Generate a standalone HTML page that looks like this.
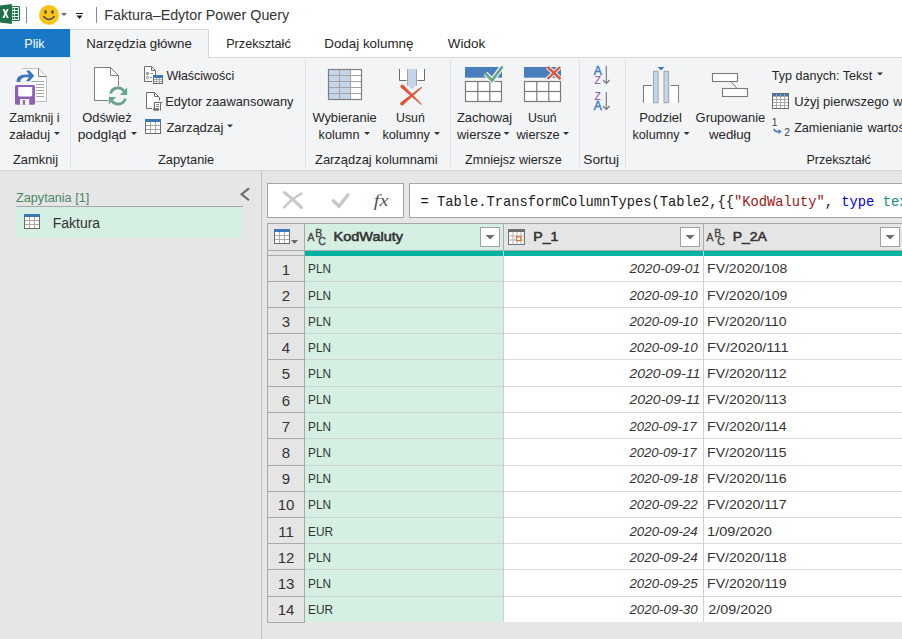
<!DOCTYPE html>
<html><head><meta charset="utf-8"><title>Faktura–Edytor Power Query</title>
<style>
html,body{margin:0;padding:0;width:902px;height:639px;overflow:hidden;background:#e6e6e6;}
svg{display:block;}

</style></head>
<body>
<svg width="902" height="639" viewBox="0 0 902 639">
<rect x="0" y="0" width="902" height="639" fill="#e6e6e6" />
<rect x="0" y="0" width="902" height="57" fill="#ffffff" />
<path d="M0 5.5 L11.8 4 L11.8 24 L0 22.5 Z" fill="#1e7145"/>
<rect x="11.5" y="6.5" width="8" height="14" rx="1" fill="#fff" stroke="#1e7145" stroke-width="1.2"/>
<rect x="12.5" y="8" width="1.8" height="2" fill="#1e7145" />
<rect x="15" y="8" width="3" height="2" fill="#1e7145" />
<rect x="12.5" y="11" width="1.8" height="2" fill="#1e7145" />
<rect x="15" y="11" width="3" height="2" fill="#1e7145" />
<rect x="12.5" y="14" width="1.8" height="2" fill="#1e7145" />
<rect x="15" y="14" width="3" height="2" fill="#1e7145" />
<rect x="12.5" y="17" width="1.8" height="2" fill="#1e7145" />
<rect x="15" y="17" width="3" height="2" fill="#1e7145" />
<path d="M2.6 9 L4.6 9 L5.6 11.5 L6.6 9 L8.6 9 L6.7 13.5 L8.8 18 L6.8 18 L5.6 15.3 L4.4 18 L2.4 18 L4.5 13.5 Z" fill="#fff"/>
<rect x="26" y="7" width="1" height="16" fill="#8a8a8a" />
<circle cx="49" cy="15" r="10" fill="#fbc316"/>
<ellipse cx="45.5" cy="12" rx="1.3" ry="1.9" fill="#4b4f58"/>
<ellipse cx="52.5" cy="12" rx="1.3" ry="1.9" fill="#4b4f58"/>
<path d="M43.3 16 Q49 23 54.7 16" fill="none" stroke="#4b4f58" stroke-width="1.3"/>
<path d="M61.0 13.0 L67.0 13.0 L64 16.0 Z" fill="#6a6a6a"/>
<rect x="76" y="13" width="7" height="1" fill="#1a1a1a" />
<path d="M76.5 15.5 L82.5 15.5 L79.5 19 Z" fill="#1a1a1a"/>
<rect x="96" y="7" width="1" height="16" fill="#8a8a8a" />
<text x="104.30" y="20" font-size="14.3" fill="#333333" text-anchor="start" font-weight="normal" font-style="normal" style='font-family:"Liberation Sans", sans-serif' textLength="184.85" lengthAdjust="spacingAndGlyphs" >Faktura–Edytor Power Query</text>
<rect x="0" y="29" width="70" height="28" fill="#1878c7" />
<text x="24.33" y="48" font-size="13" fill="#ffffff" text-anchor="start" font-weight="normal" font-style="normal" style='font-family:"Liberation Sans", sans-serif' textLength="20.34" lengthAdjust="spacingAndGlyphs" >Plik</text>
<rect x="70" y="29" width="139" height="29" fill="#f3f4f6" />
<rect x="70" y="29" width="139" height="1" fill="#d5d6d9" />
<rect x="70" y="29" width="1" height="28" fill="#e4e5e8" />
<rect x="208" y="29" width="1" height="28" fill="#d5d6d9" />
<rect x="208" y="57" width="694" height="1" fill="#d5d6d9" />
<text x="86.18" y="48" font-size="13" fill="#262626" text-anchor="start" font-weight="normal" font-style="normal" style='font-family:"Liberation Sans", sans-serif' textLength="105.75" lengthAdjust="spacingAndGlyphs" >Narzędzia główne</text>
<text x="226.21" y="48" font-size="13" fill="#262626" text-anchor="start" font-weight="normal" font-style="normal" style='font-family:"Liberation Sans", sans-serif' textLength="64.51" lengthAdjust="spacingAndGlyphs" >Przekształć</text>
<text x="324.29" y="48" font-size="13" fill="#262626" text-anchor="start" font-weight="normal" font-style="normal" style='font-family:"Liberation Sans", sans-serif' textLength="89.08" lengthAdjust="spacingAndGlyphs" >Dodaj kolumnę</text>
<text x="447.80" y="48" font-size="13" fill="#262626" text-anchor="start" font-weight="normal" font-style="normal" style='font-family:"Liberation Sans", sans-serif' textLength="37.37" lengthAdjust="spacingAndGlyphs" >Widok</text>
<rect x="0" y="58" width="902" height="112" fill="#f3f4f6" />
<rect x="70" y="57" width="138" height="1" fill="#f3f4f6" />
<rect x="0" y="170" width="902" height="1" fill="#d6d6d6" />
<rect x="70" y="60" width="1" height="107" fill="#dedfe2" />
<rect x="305" y="60" width="1" height="107" fill="#dedfe2" />
<rect x="450" y="60" width="1" height="107" fill="#dedfe2" />
<rect x="579" y="60" width="1" height="107" fill="#dedfe2" />
<rect x="625" y="60" width="1" height="107" fill="#dedfe2" />
<text x="13.00" y="163.5" font-size="12.7" fill="#262626" text-anchor="start" font-weight="normal" font-style="normal" style='font-family:"Liberation Sans", sans-serif' textLength="45.05" lengthAdjust="spacingAndGlyphs" >Zamknij</text>
<text x="158.00" y="163.5" font-size="12.7" fill="#262626" text-anchor="start" font-weight="normal" font-style="normal" style='font-family:"Liberation Sans", sans-serif' textLength="56.21" lengthAdjust="spacingAndGlyphs" >Zapytanie</text>
<text x="315.00" y="163.5" font-size="12.7" fill="#262626" text-anchor="start" font-weight="normal" font-style="normal" style='font-family:"Liberation Sans", sans-serif' textLength="122.67" lengthAdjust="spacingAndGlyphs" >Zarządzaj kolumnami</text>
<text x="465.00" y="163.5" font-size="12.7" fill="#262626" text-anchor="start" font-weight="normal" font-style="normal" style='font-family:"Liberation Sans", sans-serif' textLength="96.65" lengthAdjust="spacingAndGlyphs" >Zmniejsz wiersze</text>
<text x="583.34" y="163.5" font-size="12.7" fill="#262626" text-anchor="start" font-weight="normal" font-style="normal" style='font-family:"Liberation Sans", sans-serif' textLength="35.85" lengthAdjust="spacingAndGlyphs" >Sortuj</text>
<text x="806.39" y="163.5" font-size="12.7" fill="#262626" text-anchor="start" font-weight="normal" font-style="normal" style='font-family:"Liberation Sans", sans-serif' textLength="64.37" lengthAdjust="spacingAndGlyphs" >Przekształć</text>
<text x="9.20" y="121.5" font-size="12.7" fill="#262626" text-anchor="start" font-weight="normal" font-style="normal" style='font-family:"Liberation Sans", sans-serif' textLength="50.48" lengthAdjust="spacingAndGlyphs" >Zamknij i</text>
<text x="9.20" y="139" font-size="12.7" fill="#262626" text-anchor="start" font-weight="normal" font-style="normal" style='font-family:"Liberation Sans", sans-serif' textLength="40.92" lengthAdjust="spacingAndGlyphs" >załaduj</text>
<path d="M54.0 132.0 L60.0 132.0 L57 135.0 Z" fill="#333"/>
<text x="82.20" y="121.5" font-size="12.7" fill="#262626" text-anchor="start" font-weight="normal" font-style="normal" style='font-family:"Liberation Sans", sans-serif' textLength="49.45" lengthAdjust="spacingAndGlyphs" >Odśwież</text>
<text x="77.70" y="139" font-size="12.7" fill="#262626" text-anchor="start" font-weight="normal" font-style="normal" style='font-family:"Liberation Sans", sans-serif' textLength="48.77" lengthAdjust="spacingAndGlyphs" >podgląd</text>
<path d="M131.0 132.0 L137.0 132.0 L134 135.0 Z" fill="#333"/>
<text x="312.40" y="121.5" font-size="12.7" fill="#262626" text-anchor="start" font-weight="normal" font-style="normal" style='font-family:"Liberation Sans", sans-serif' textLength="64.26" lengthAdjust="spacingAndGlyphs" >Wybieranie</text>
<text x="318.60" y="139" font-size="12.7" fill="#262626" text-anchor="start" font-weight="normal" font-style="normal" style='font-family:"Liberation Sans", sans-serif' textLength="40.87" lengthAdjust="spacingAndGlyphs" >kolumn</text>
<path d="M364.0 132.0 L370.0 132.0 L367 135.0 Z" fill="#333"/>
<text x="396.00" y="121.5" font-size="12.7" fill="#262626" text-anchor="start" font-weight="normal" font-style="normal" style='font-family:"Liberation Sans", sans-serif' textLength="28.78" lengthAdjust="spacingAndGlyphs" >Usuń</text>
<text x="382.40" y="139" font-size="12.7" fill="#262626" text-anchor="start" font-weight="normal" font-style="normal" style='font-family:"Liberation Sans", sans-serif' textLength="47.53" lengthAdjust="spacingAndGlyphs" >kolumny</text>
<path d="M434.0 132.0 L440.0 132.0 L437 135.0 Z" fill="#333"/>
<text x="457.00" y="121.5" font-size="12.7" fill="#262626" text-anchor="start" font-weight="normal" font-style="normal" style='font-family:"Liberation Sans", sans-serif' textLength="55.14" lengthAdjust="spacingAndGlyphs" >Zachowaj</text>
<text x="457.00" y="139" font-size="12.7" fill="#262626" text-anchor="start" font-weight="normal" font-style="normal" style='font-family:"Liberation Sans", sans-serif' textLength="43.85" lengthAdjust="spacingAndGlyphs" >wiersze</text>
<path d="M503.5 132.0 L509.5 132.0 L506.5 135.0 Z" fill="#333"/>
<text x="528.00" y="121.5" font-size="12.7" fill="#262626" text-anchor="start" font-weight="normal" font-style="normal" style='font-family:"Liberation Sans", sans-serif' textLength="28.58" lengthAdjust="spacingAndGlyphs" >Usuń</text>
<text x="516.40" y="139" font-size="12.7" fill="#262626" text-anchor="start" font-weight="normal" font-style="normal" style='font-family:"Liberation Sans", sans-serif' textLength="43.24" lengthAdjust="spacingAndGlyphs" >wiersze</text>
<path d="M563.0 132.0 L569.0 132.0 L566 135.0 Z" fill="#333"/>
<text x="639.18" y="121.5" font-size="12.7" fill="#262626" text-anchor="start" font-weight="normal" font-style="normal" style='font-family:"Liberation Sans", sans-serif' textLength="42.79" lengthAdjust="spacingAndGlyphs" >Podziel</text>
<text x="632.50" y="139" font-size="12.7" fill="#262626" text-anchor="start" font-weight="normal" font-style="normal" style='font-family:"Liberation Sans", sans-serif' textLength="47.03" lengthAdjust="spacingAndGlyphs" >kolumny</text>
<path d="M683.6 132.0 L689.6 132.0 L686.6 135.0 Z" fill="#333"/>
<text x="695.60" y="121.5" font-size="12.7" fill="#262626" text-anchor="start" font-weight="normal" font-style="normal" style='font-family:"Liberation Sans", sans-serif' textLength="69.60" lengthAdjust="spacingAndGlyphs" >Grupowanie</text>
<text x="709.00" y="139" font-size="12.7" fill="#262626" text-anchor="start" font-weight="normal" font-style="normal" style='font-family:"Liberation Sans", sans-serif' textLength="42.00" lengthAdjust="spacingAndGlyphs" >według</text>
<text x="166.40" y="80" font-size="12.7" fill="#262626" text-anchor="start" font-weight="normal" font-style="normal" style='font-family:"Liberation Sans", sans-serif' textLength="67.92" lengthAdjust="spacingAndGlyphs" >Właściwości</text>
<text x="165.28" y="106" font-size="12.7" fill="#262626" text-anchor="start" font-weight="normal" font-style="normal" style='font-family:"Liberation Sans", sans-serif' textLength="128.16" lengthAdjust="spacingAndGlyphs" >Edytor zaawansowany</text>
<text x="166.40" y="132" font-size="12.7" fill="#262626" text-anchor="start" font-weight="normal" font-style="normal" style='font-family:"Liberation Sans", sans-serif' textLength="57.06" lengthAdjust="spacingAndGlyphs" >Zarządzaj</text>
<path d="M227.0 124.5 L233.0 124.5 L230 127.5 Z" fill="#333"/>
<text x="771.80" y="80" font-size="12.7" fill="#262626" text-anchor="start" font-weight="normal" font-style="normal" style='font-family:"Liberation Sans", sans-serif' textLength="100.35" lengthAdjust="spacingAndGlyphs" >Typ danych: Tekst</text>
<path d="M877.0 72.5 L883.0 72.5 L880 75.5 Z" fill="#333"/>
<text x="794.20" y="105.5" font-size="12.7" fill="#262626" text-anchor="start" font-weight="normal" font-style="normal" style='font-family:"Liberation Sans", sans-serif' textLength="94.59" lengthAdjust="spacingAndGlyphs" >Użyj pierwszego</text>
<text x="893.20" y="105.5" font-size="12.7" fill="#262626" text-anchor="start" font-weight="normal" font-style="normal" style='font-family:"Liberation Sans", sans-serif' >wiersza jako nagłówków</text>
<text x="794.20" y="131.5" font-size="12.7" fill="#262626" text-anchor="start" font-weight="normal" font-style="normal" style='font-family:"Liberation Sans", sans-serif' textLength="68.56" lengthAdjust="spacingAndGlyphs" >Zamienianie</text>
<text x="867.40" y="131.5" font-size="12.7" fill="#262626" text-anchor="start" font-weight="normal" font-style="normal" style='font-family:"Liberation Sans", sans-serif' >wartości</text>
<path d="M22 68.5 L38.5 68.5 L46.5 76.5 L46.5 101.5 L35 101.5" fill="#fff" stroke="#7f7f7f" stroke-width="1"/>
<path d="M22 68.5 L38.5 68.5 L46.5 76.5 L46.5 101.5 L30 101.5 L30 80 L22 80 Z" fill="#fff"/>
<path d="M38.5 68.5 L38.5 76.5 L46.5 76.5" fill="none" stroke="#7f7f7f" stroke-width="1"/>
<rect x="31" y="81.0" width="13" height="1" fill="#a6a6a6" />
<rect x="36" y="84.0" width="8" height="1" fill="#a6a6a6" />
<rect x="36" y="87.0" width="8" height="1" fill="#a6a6a6" />
<rect x="36" y="90.0" width="8" height="1" fill="#a6a6a6" />
<rect x="36" y="93.0" width="8" height="1" fill="#a6a6a6" />
<rect x="36" y="96.0" width="8" height="1" fill="#a6a6a6" />
<path d="M16.5 82 C16.5 76 21 74.5 27 74.5 L29 74.5 L26 70.5 L29.5 70.5 L34.2 75.8 L29.5 81.2 L26 81.2 L29 77.3 L27 77.3 C23 77.3 20.5 78.5 20.2 82 Z" fill="#3b78c1"/>
<rect x="15" y="85" width="20" height="19.8" rx="1.6" fill="#9061b6"/>
<path d="M18.2 87 L32.2 87 L32.2 94.8 Q32.2 96.4 30.6 96.4 L19.8 96.4 Q18.2 96.4 18.2 94.8 Z" fill="#fff"/>
<rect x="20" y="99" width="9.2" height="5.8" fill="#fff" />
<rect x="22.8" y="100" width="2.2" height="4.8" fill="#9061b6" />
<path d="M94.5 67.5 L110.5 67.5 L118.5 75.5 L118.5 86 M108 100.5 L94.5 100.5 Z" fill="none" stroke="#7f7f7f" stroke-width="1"/>
<path d="M94.5 67.5 L110.5 67.5 L118.5 75.5 L118.5 86 L108 100.5 L94.5 100.5 Z" fill="#fff"/>
<path d="M94.5 100.5 L94.5 67.5 L110.5 67.5 L118.5 75.5 L118.5 86" fill="none" stroke="#7f7f7f" stroke-width="1"/>
<path d="M94.5 100.5 L108 100.5" fill="none" stroke="#7f7f7f" stroke-width="1"/>
<path d="M110.5 67.5 L110.5 75.5 L118.5 75.5" fill="none" stroke="#7f7f7f" stroke-width="1"/>
<circle cx="118" cy="96" r="10" fill="#f3f4f6"/>
<path d="M110.6 93.5 A7.6 7.6 0 0 1 124.2 91.2" fill="none" stroke="#68a68c" stroke-width="2.8"/>
<path d="M127.2 87.5 L127.2 95 L120 95 Z" fill="#68a68c"/>
<path d="M125.4 98.5 A7.6 7.6 0 0 1 111.8 100.8" fill="none" stroke="#68a68c" stroke-width="2.8"/>
<path d="M108.8 104.5 L108.8 97 L116 97 Z" fill="#68a68c"/>
<path d="M144.5 81.5 V66.5 H151.5 L155.5 70.5 V75" fill="#fff" stroke="#6d6d6d" stroke-width="1"/>
<path d="M151.5 66.5 V70.5 H155.5" fill="none" stroke="#6d6d6d" stroke-width="1"/>
<path d="M144.5 81.5 H152" stroke="#6d6d6d" stroke-width="1"/>
<circle cx="147.5" cy="73.5" r="1.4" fill="#8a8a8a"/>
<circle cx="147.5" cy="77.5" r="1.1" fill="none" stroke="#8a8a8a" stroke-width="1"/>
<rect x="150" y="73" width="3" height="1" fill="#9a9a9a" />
<rect x="150" y="77" width="2" height="1" fill="#9a9a9a" />
<rect x="153" y="75" width="10" height="9" fill="#6a6a6a" />
<rect x="153" y="75" width="10" height="3" fill="#3d77b9" />
<rect x="154" y="78" width="8" height="5" fill="#a8a8a8" />
<rect x="154" y="78" width="2" height="1" fill="#ffffff" />
<rect x="154" y="80" width="2" height="1" fill="#ffffff" />
<rect x="154" y="82" width="2" height="1" fill="#ffffff" />
<rect x="157" y="78" width="2" height="1" fill="#ffffff" />
<rect x="157" y="80" width="2" height="1" fill="#ffffff" />
<rect x="157" y="82" width="2" height="1" fill="#ffffff" />
<rect x="160" y="78" width="2" height="1" fill="#ffffff" />
<rect x="160" y="80" width="2" height="1" fill="#ffffff" />
<rect x="160" y="82" width="2" height="1" fill="#ffffff" />
<path d="M146.5 108.5 V92.5 H154.5 L159.5 97.5 V100.5" fill="#fff" stroke="#6d6d6d" stroke-width="1"/>
<path d="M154.5 92.5 V96.5 H159" fill="none" stroke="#6d6d6d" stroke-width="1"/>
<path d="M146.5 108.5 H152" stroke="#6d6d6d" stroke-width="1"/>
<path d="M154.5 109 V102.5 H162.5" fill="none" stroke="#6d6d6d" stroke-width="1.1"/>
<path d="M155 103 H160 V110.5 H155 Z" fill="#fff"/>
<path d="M154.5 103 V109 M160.5 103 V110.5" fill="none" stroke="#6d6d6d" stroke-width="1"/>
<rect x="156" y="104" width="3" height="1" fill="#8a8a8a" />
<rect x="156" y="106" width="3" height="1" fill="#8a8a8a" />
<path d="M153.3 108.2 H159 V110.8 H154.3 Q153.3 110.8 153.3 109.6 Z" fill="#6d6d6d"/>
<rect x="145" y="119" width="16" height="15" fill="#6a6a6a" />
<rect x="146" y="122" width="14" height="11" fill="#ffffff" />
<rect x="145" y="119" width="16" height="3" fill="#3d77b9" />
<rect x="150" y="122" width="1" height="11" fill="#a8a8a8" />
<rect x="155" y="122" width="1" height="11" fill="#a8a8a8" />
<rect x="146" y="125" width="14" height="1" fill="#a8a8a8" />
<rect x="146" y="129" width="14" height="1" fill="#a8a8a8" />
<rect x="328.5" y="69.5" width="33" height="30" fill="#fff" />
<rect x="328.5" y="69.5" width="22" height="30" fill="#c4d6ea" />
<rect x="339.0" y="69.5" width="1" height="30" fill="#a3a3a3" />
<rect x="350.0" y="69.5" width="1" height="30" fill="#a3a3a3" />
<rect x="328.5" y="75.0" width="33" height="1" fill="#a3a3a3" />
<rect x="328.5" y="81.0" width="33" height="1" fill="#a3a3a3" />
<rect x="328.5" y="87.0" width="33" height="1" fill="#a3a3a3" />
<rect x="328.5" y="93.0" width="33" height="1" fill="#a3a3a3" />
<rect x="328.5" y="69.5" width="33" height="30" fill="none" stroke="#7f7f7f" stroke-width="1.2"/>
<rect x="400" y="69" width="7" height="11" fill="#fff" />
<rect x="417" y="69" width="7" height="11" fill="#fff" />
<path d="M399.5 69 V80.5 H406.5 M417.5 80.5 H424.5 V69" fill="none" stroke="#6d6d6d" stroke-width="1"/>
<path d="M407.5 69 V85 L412 89.3 L416.5 85 V69 Z" fill="#c2d5ea"/>
<path d="M407.5 69 V85.5 M416.5 69 V85.5" fill="none" stroke="#a3a3a3" stroke-width="1"/>
<path d="M400.97 87.71 L403.43 85.09 L421.94 104.24 L421.26 104.97 Z" fill="#db583b"/>
<circle cx="402.2" cy="86.4" r="1.8" fill="#db583b"/>
<path d="M403.22 105.06 L400.78 102.14 L421.32 86.74 L422.08 87.66 Z" fill="#db583b"/>
<circle cx="402" cy="103.6" r="1.9" fill="#db583b"/>
<rect x="465" y="67" width="37" height="10.7" fill="#4a7ebb" />
<rect x="465.5" y="81.5" width="36" height="20" fill="#fff" stroke="#7a7a7a" stroke-width="1.2"/>
<rect x="477.2" y="81.5" width="1.2" height="20" fill="#7a7a7a" />
<rect x="489.2" y="81.5" width="1.2" height="20" fill="#7a7a7a" />
<rect x="465.5" y="90.9" width="36" height="1.2" fill="#7a7a7a" />
<path d="M485.5 73.5 L492 80.5 L502.5 66.5" fill="none" stroke="#f3f4f6" stroke-width="5.2" stroke-linejoin="miter"/>
<path d="M485.5 73.5 L492 80.5 L502.5 66.5" fill="none" stroke="#68a68c" stroke-width="2.8" stroke-linejoin="miter"/>
<rect x="524" y="67" width="37" height="10.7" fill="#4a7ebb" />
<rect x="524.5" y="81.5" width="36" height="20" fill="#fff" stroke="#7a7a7a" stroke-width="1.2"/>
<rect x="536.2" y="81.5" width="1.2" height="20" fill="#7a7a7a" />
<rect x="548.2" y="81.5" width="1.2" height="20" fill="#7a7a7a" />
<rect x="524.5" y="90.9" width="36" height="1.2" fill="#7a7a7a" />
<path d="M547.5 67 L560.5 79 M547.5 79 L560 67" fill="none" stroke="#f3f4f6" stroke-width="4.5"/>
<path d="M547.5 67 L560.5 79 M547.5 79 L560 67" fill="none" stroke="#d9573a" stroke-width="2.4"/>
<text x="597.80" y="74.8" font-size="12.2" fill="#3b78c1" text-anchor="middle" font-weight="normal" font-style="normal" style='font-family:"Liberation Sans", sans-serif' stroke="#3b78c1" stroke-width="0.4">A</text>
<text x="597.60" y="83.8" font-size="10.5" fill="#8e44ad" text-anchor="middle" font-weight="normal" font-style="normal" style='font-family:"Liberation Sans", sans-serif' >Z</text>
<text x="597.60" y="99.8" font-size="10.5" fill="#8e44ad" text-anchor="middle" font-weight="normal" font-style="normal" style='font-family:"Liberation Sans", sans-serif' >Z</text>
<text x="597.80" y="110" font-size="12.2" fill="#3b78c1" text-anchor="middle" font-weight="normal" font-style="normal" style='font-family:"Liberation Sans", sans-serif' stroke="#3b78c1" stroke-width="0.4">A</text>
<path d="M606.3 66 L606.3 83.5 M603 80 L606.3 83.5 L609.6 80" fill="none" stroke="#737373" stroke-width="1.1"/>
<path d="M606.3 92 L606.3 109.5 M603 106 L606.3 109.5 L609.6 106" fill="none" stroke="#737373" stroke-width="1.1"/>
<path d="M643.5 102.7 L643.5 85.5 L652 85.5 M670.5 85.5 L678.5 85.5 L678.5 102.7" fill="none" stroke="#7a7a7a" stroke-width="1.1"/>
<rect x="644" y="86" width="8" height="16.7" fill="#fff" />
<rect x="670.5" y="86" width="7.6" height="16.7" fill="#fff" />
<rect x="653.5" y="71.3" width="4.6" height="31.4" fill="#c4d6ea" stroke="#a3a3a3" stroke-width="1"/>
<rect x="664" y="71.3" width="4.6" height="31.4" fill="#c4d6ea" stroke="#a3a3a3" stroke-width="1"/>
<path d="M657.5 67 L664.5 67 L661 70.5 Z" fill="#3b78c1"/>
<rect x="712.5" y="73.5" width="25" height="8" fill="#fff" stroke="#7a7a7a" stroke-width="1.1"/>
<rect x="722.5" y="88.5" width="25" height="8" fill="#fff" stroke="#7a7a7a" stroke-width="1.1"/>
<path d="M731 81.5 L737 88.5" stroke="#7a7a7a" stroke-width="1"/>
<rect x="772" y="93" width="17" height="16" fill="#6a6a6a" />
<rect x="773" y="94" width="15" height="14" fill="#ffffff" />
<rect x="773" y="94" width="15" height="2" fill="#3d77b9" />
<rect x="776" y="94" width="1" height="14" fill="#a8a8a8" />
<rect x="780" y="94" width="1" height="14" fill="#a8a8a8" />
<rect x="784" y="94" width="1" height="14" fill="#a8a8a8" />
<rect x="773" y="96" width="15" height="1" fill="#a8a8a8" />
<rect x="773" y="99" width="15" height="1" fill="#a8a8a8" />
<rect x="773" y="102" width="15" height="1" fill="#a8a8a8" />
<rect x="773" y="105" width="15" height="1" fill="#a8a8a8" />
<text x="774.60" y="125.8" font-size="10.3" fill="#404040" text-anchor="middle" font-weight="normal" font-style="normal" style='font-family:"Liberation Sans", sans-serif' >1</text>
<text x="787.10" y="135.6" font-size="10.3" fill="#404040" text-anchor="middle" font-weight="normal" font-style="normal" style='font-family:"Liberation Sans", sans-serif' >2</text>
<path d="M774 128.8 Q774.5 132 778.5 131.6" fill="none" stroke="#3b78c1" stroke-width="1.5"/>
<path d="M778.3 129.3 L781.8 131.6 L778.3 134 Z" fill="#3b78c1"/>
<rect x="261" y="171" width="1" height="468" fill="#bdbdbd" />
<text x="16.00" y="201.5" font-size="12.5" fill="#4a8667" text-anchor="start" font-weight="normal" font-style="normal" style='font-family:"Liberation Sans", sans-serif' textLength="73.24" lengthAdjust="spacingAndGlyphs" >Zapytania [1]</text>
<path d="M249 188.4 L241.6 194.3 L249 200.2" fill="none" stroke="#6a6a6a" stroke-width="2.1"/>
<rect x="16" y="206" width="227" height="1" fill="#a9a9a9" />
<rect x="16" y="207" width="227" height="30" fill="#d5efe2" />
<rect x="24" y="214" width="16" height="15" fill="#6a6a6a" />
<rect x="25" y="217" width="14" height="11" fill="#ffffff" />
<rect x="24" y="214" width="16" height="3" fill="#3d77b9" />
<rect x="29" y="217" width="1" height="11" fill="#a8a8a8" />
<rect x="34" y="217" width="1" height="11" fill="#a8a8a8" />
<rect x="25" y="220" width="14" height="1" fill="#a8a8a8" />
<rect x="25" y="224" width="14" height="1" fill="#a8a8a8" />
<text x="52.80" y="227.5" font-size="14" fill="#333333" text-anchor="start" font-weight="normal" font-style="normal" style='font-family:"Liberation Sans", sans-serif' textLength="47.34" lengthAdjust="spacingAndGlyphs" >Faktura</text>
<rect x="267.5" y="183.5" width="136" height="34" fill="#fff" stroke="#a6a6a6" stroke-width="1"/>
<path d="M284.5 192.5 Q293 199 301.5 207.5" stroke="#c8c8c8" stroke-width="3.2" stroke-linecap="round" fill="none"/>
<path d="M301.5 193.5 Q291 199.5 284 207.5" stroke="#c8c8c8" stroke-width="2.4" stroke-linecap="round" fill="none"/>
<path d="M332.3 199.8 L339 206.2 L348.8 193.8" stroke="#c8c8c8" stroke-width="3.4" fill="none"/>
<text x="373.80" y="205.5" font-size="17.5" fill="#555555" text-anchor="start" font-weight="normal" font-style="italic" style='font-family:"Liberation Serif", serif' textLength="14.78" lengthAdjust="spacingAndGlyphs" >fx</text>
<rect x="409.5" y="183.5" width="500" height="34" fill="#fff" stroke="#a6a6a6" stroke-width="1"/>
<text x="420.5" y="205.5" font-size="13.75" style='font-family:"Liberation Mono", monospace' fill="#1a1a1a" xml:space="preserve">= Table.TransformColumnTypes(Table2,{{<tspan fill="#a31515">"KodWaluty"</tspan>, <tspan fill="#0000ff">type</tspan> <tspan fill="#0c8a8a">text</tspan>}, {"P_1", type date}})</text>
<rect x="267" y="223" width="640" height="1" fill="#a9a9a9" />
<rect x="267" y="223" width="1" height="400" fill="#a9a9a9" />
<rect x="268" y="224" width="36" height="26" fill="#e5e5e5" />
<rect x="305" y="224" width="198" height="26" fill="#d5efe2" />
<rect x="504" y="224" width="199" height="26" fill="#e5e5e5" />
<rect x="704" y="224" width="200" height="26" fill="#e5e5e5" />
<rect x="268" y="250" width="634" height="1" fill="#a9a9a9" />
<rect x="304" y="224" width="1" height="399" fill="#a9a9a9" />
<rect x="503" y="224" width="1" height="27" fill="#ababab" />
<rect x="703" y="224" width="1" height="27" fill="#ababab" />
<rect x="268" y="251" width="36" height="4" fill="#e5e5e5" />
<rect x="268" y="255" width="36" height="1" fill="#a9a9a9" />
<rect x="305" y="251" width="597" height="5" fill="#02b3a3" />
<rect x="503" y="251" width="1" height="5" fill="#cfdcd9" />
<rect x="703" y="251" width="1" height="5" fill="#cfdcd9" />
<rect x="274" y="229" width="16" height="15" fill="#6a6a6a" />
<rect x="275" y="232" width="14" height="11" fill="#ffffff" />
<rect x="274" y="229" width="16" height="3" fill="#3d77b9" />
<rect x="279" y="232" width="1" height="11" fill="#a8a8a8" />
<rect x="284" y="232" width="1" height="11" fill="#a8a8a8" />
<rect x="275" y="235" width="14" height="1" fill="#a8a8a8" />
<rect x="275" y="239" width="14" height="1" fill="#a8a8a8" />
<path d="M291 240 L298 240 L294.5 244 Z" fill="#6d6d6d"/>
<text x="311.00" y="240.8" font-size="10.4" fill="#444" text-anchor="middle" font-weight="normal" font-style="normal" style='font-family:"Liberation Sans", sans-serif' stroke="#444" stroke-width="0.35">A</text>
<text x="318.60" y="236.7" font-size="10.4" fill="#444" text-anchor="middle" font-weight="normal" font-style="normal" style='font-family:"Liberation Sans", sans-serif' stroke="#444" stroke-width="0.35">B</text>
<text x="322.20" y="244.8" font-size="10.6" fill="#444" text-anchor="middle" font-weight="normal" font-style="normal" style='font-family:"Liberation Sans", sans-serif' stroke="#444" stroke-width="0.35">C</text>
<text x="333.64" y="241.3" font-size="13" fill="#333333" text-anchor="start" font-weight="normal" font-style="normal" style='font-family:"Liberation Sans", sans-serif' textLength="69.43" lengthAdjust="spacingAndGlyphs" stroke="#333333" stroke-width="0.55">KodWaluty</text>
<rect x="480.5" y="227.5" width="19" height="19" fill="#fff" stroke="#a0a0a0" stroke-width="1"/>
<path d="M485.5 235 L494.5 235 L490 239.5 Z" fill="#6d6d6d"/>
<rect x="508.5" y="229.5" width="16" height="15" fill="#fff" stroke="#6d6d6d" stroke-width="1"/>
<rect x="508" y="229" width="17" height="3" fill="#6d6d6d" />
<rect x="512.5" y="232" width="1" height="12.5" fill="#b0b0b0" />
<rect x="516.5" y="232" width="1" height="12.5" fill="#b0b0b0" />
<rect x="520.5" y="232" width="1" height="12.5" fill="#b0b0b0" />
<rect x="508.5" y="235.5" width="16" height="1" fill="#b0b0b0" />
<rect x="508.5" y="239.5" width="16" height="1" fill="#b0b0b0" />
<rect x="516.6" y="236.8" width="4.2" height="3.8" fill="#fff" stroke="#e07020" stroke-width="1.2"/>
<text x="533.37" y="241.3" font-size="13" fill="#333333" text-anchor="start" font-weight="normal" font-style="normal" style='font-family:"Liberation Sans", sans-serif' textLength="24.96" lengthAdjust="spacingAndGlyphs" stroke="#333333" stroke-width="0.55">P_1</text>
<rect x="680.5" y="227.5" width="19" height="19" fill="#fff" stroke="#a0a0a0" stroke-width="1"/>
<path d="M685.5 235 L694.5 235 L690 239.5 Z" fill="#6d6d6d"/>
<text x="710.00" y="240.8" font-size="10.4" fill="#444" text-anchor="middle" font-weight="normal" font-style="normal" style='font-family:"Liberation Sans", sans-serif' stroke="#444" stroke-width="0.35">A</text>
<text x="717.60" y="236.7" font-size="10.4" fill="#444" text-anchor="middle" font-weight="normal" font-style="normal" style='font-family:"Liberation Sans", sans-serif' stroke="#444" stroke-width="0.35">B</text>
<text x="721.20" y="244.8" font-size="10.6" fill="#444" text-anchor="middle" font-weight="normal" font-style="normal" style='font-family:"Liberation Sans", sans-serif' stroke="#444" stroke-width="0.35">C</text>
<text x="732.65" y="241.3" font-size="13" fill="#333333" text-anchor="start" font-weight="normal" font-style="normal" style='font-family:"Liberation Sans", sans-serif' textLength="34.07" lengthAdjust="spacingAndGlyphs" stroke="#333333" stroke-width="0.55">P_2A</text>
<rect x="880.5" y="227.5" width="19" height="19" fill="#fff" stroke="#a0a0a0" stroke-width="1"/>
<path d="M885.5 235 L894.5 235 L890 239.5 Z" fill="#6d6d6d"/>
<rect x="268" y="256" width="36" height="25" fill="#e5e5e5" />
<rect x="305" y="256" width="198" height="25" fill="#d5efe2" />
<rect x="504" y="256" width="199" height="25" fill="#ffffff" />
<rect x="704" y="256" width="198" height="25" fill="#ffffff" />
<text x="286.00" y="275" font-size="15" fill="#333333" text-anchor="middle" font-weight="normal" font-style="normal" style='font-family:"Liberation Sans", sans-serif' >1</text>
<text x="308.03" y="273" font-size="12.6" fill="#333333" text-anchor="start" font-weight="normal" font-style="normal" style='font-family:"Liberation Sans", sans-serif' textLength="22.97" lengthAdjust="spacingAndGlyphs" >PLN</text>
<text x="629.40" y="273" font-size="12.6" fill="#333333" text-anchor="start" font-weight="normal" font-style="italic" style='font-family:"Liberation Sans", sans-serif' textLength="70.72" lengthAdjust="spacingAndGlyphs" >2020-09-01</text>
<text x="707.11" y="273" font-size="12.6" fill="#333333" text-anchor="start" font-weight="normal" font-style="normal" style='font-family:"Liberation Sans", sans-serif' textLength="80.12" lengthAdjust="spacingAndGlyphs" >FV/2020/108</text>
<rect x="268" y="281" width="36" height="1" fill="#a9a9a9" />
<rect x="305" y="281" width="198" height="1" fill="#cdd5d1" />
<rect x="504" y="281" width="398" height="1" fill="#d9d9d9" />
<rect x="268" y="282" width="36" height="25" fill="#e5e5e5" />
<rect x="305" y="282" width="198" height="25" fill="#d5efe2" />
<rect x="504" y="282" width="199" height="25" fill="#ffffff" />
<rect x="704" y="282" width="198" height="25" fill="#ffffff" />
<text x="286.00" y="301" font-size="15" fill="#333333" text-anchor="middle" font-weight="normal" font-style="normal" style='font-family:"Liberation Sans", sans-serif' >2</text>
<text x="308.03" y="300" font-size="12.6" fill="#333333" text-anchor="start" font-weight="normal" font-style="normal" style='font-family:"Liberation Sans", sans-serif' textLength="22.97" lengthAdjust="spacingAndGlyphs" >PLN</text>
<text x="629.40" y="300" font-size="12.6" fill="#333333" text-anchor="start" font-weight="normal" font-style="italic" style='font-family:"Liberation Sans", sans-serif' textLength="68.33" lengthAdjust="spacingAndGlyphs" >2020-09-10</text>
<text x="707.11" y="300" font-size="12.6" fill="#333333" text-anchor="start" font-weight="normal" font-style="normal" style='font-family:"Liberation Sans", sans-serif' textLength="80.12" lengthAdjust="spacingAndGlyphs" >FV/2020/109</text>
<rect x="268" y="307" width="36" height="1" fill="#a9a9a9" />
<rect x="305" y="307" width="198" height="1" fill="#cdd5d1" />
<rect x="504" y="307" width="398" height="1" fill="#d9d9d9" />
<rect x="268" y="308" width="36" height="25" fill="#e5e5e5" />
<rect x="305" y="308" width="198" height="25" fill="#d5efe2" />
<rect x="504" y="308" width="199" height="25" fill="#ffffff" />
<rect x="704" y="308" width="198" height="25" fill="#ffffff" />
<text x="286.00" y="327" font-size="15" fill="#333333" text-anchor="middle" font-weight="normal" font-style="normal" style='font-family:"Liberation Sans", sans-serif' >3</text>
<text x="308.03" y="326" font-size="12.6" fill="#333333" text-anchor="start" font-weight="normal" font-style="normal" style='font-family:"Liberation Sans", sans-serif' textLength="22.97" lengthAdjust="spacingAndGlyphs" >PLN</text>
<text x="629.40" y="326" font-size="12.6" fill="#333333" text-anchor="start" font-weight="normal" font-style="italic" style='font-family:"Liberation Sans", sans-serif' textLength="68.33" lengthAdjust="spacingAndGlyphs" >2020-09-10</text>
<text x="707.11" y="326" font-size="12.6" fill="#333333" text-anchor="start" font-weight="normal" font-style="normal" style='font-family:"Liberation Sans", sans-serif' textLength="79.56" lengthAdjust="spacingAndGlyphs" >FV/2020/110</text>
<rect x="268" y="333" width="36" height="1" fill="#a9a9a9" />
<rect x="305" y="333" width="198" height="1" fill="#cdd5d1" />
<rect x="504" y="333" width="398" height="1" fill="#d9d9d9" />
<rect x="268" y="334" width="36" height="25" fill="#e5e5e5" />
<rect x="305" y="334" width="198" height="25" fill="#d5efe2" />
<rect x="504" y="334" width="199" height="25" fill="#ffffff" />
<rect x="704" y="334" width="198" height="25" fill="#ffffff" />
<text x="286.00" y="353" font-size="15" fill="#333333" text-anchor="middle" font-weight="normal" font-style="normal" style='font-family:"Liberation Sans", sans-serif' >4</text>
<text x="308.03" y="352" font-size="12.6" fill="#333333" text-anchor="start" font-weight="normal" font-style="normal" style='font-family:"Liberation Sans", sans-serif' textLength="22.97" lengthAdjust="spacingAndGlyphs" >PLN</text>
<text x="629.40" y="352" font-size="12.6" fill="#333333" text-anchor="start" font-weight="normal" font-style="italic" style='font-family:"Liberation Sans", sans-serif' textLength="68.33" lengthAdjust="spacingAndGlyphs" >2020-09-10</text>
<text x="707.07" y="352" font-size="12.6" fill="#333333" text-anchor="start" font-weight="normal" font-style="normal" style='font-family:"Liberation Sans", sans-serif' textLength="81.47" lengthAdjust="spacingAndGlyphs" >FV/2020/111</text>
<rect x="268" y="359" width="36" height="1" fill="#a9a9a9" />
<rect x="305" y="359" width="198" height="1" fill="#cdd5d1" />
<rect x="504" y="359" width="398" height="1" fill="#d9d9d9" />
<rect x="268" y="360" width="36" height="26" fill="#e5e5e5" />
<rect x="305" y="360" width="198" height="26" fill="#d5efe2" />
<rect x="504" y="360" width="199" height="26" fill="#ffffff" />
<rect x="704" y="360" width="198" height="26" fill="#ffffff" />
<text x="286.00" y="379" font-size="15" fill="#333333" text-anchor="middle" font-weight="normal" font-style="normal" style='font-family:"Liberation Sans", sans-serif' >5</text>
<text x="308.03" y="378" font-size="12.6" fill="#333333" text-anchor="start" font-weight="normal" font-style="normal" style='font-family:"Liberation Sans", sans-serif' textLength="22.97" lengthAdjust="spacingAndGlyphs" >PLN</text>
<text x="629.40" y="378" font-size="12.6" fill="#333333" text-anchor="start" font-weight="normal" font-style="italic" style='font-family:"Liberation Sans", sans-serif' textLength="70.84" lengthAdjust="spacingAndGlyphs" >2020-09-11</text>
<text x="707.11" y="378" font-size="12.6" fill="#333333" text-anchor="start" font-weight="normal" font-style="normal" style='font-family:"Liberation Sans", sans-serif' textLength="79.56" lengthAdjust="spacingAndGlyphs" >FV/2020/112</text>
<rect x="268" y="386" width="36" height="1" fill="#a9a9a9" />
<rect x="305" y="386" width="198" height="1" fill="#cdd5d1" />
<rect x="504" y="386" width="398" height="1" fill="#d9d9d9" />
<rect x="268" y="387" width="36" height="25" fill="#e5e5e5" />
<rect x="305" y="387" width="198" height="25" fill="#d5efe2" />
<rect x="504" y="387" width="199" height="25" fill="#ffffff" />
<rect x="704" y="387" width="198" height="25" fill="#ffffff" />
<text x="286.00" y="406" font-size="15" fill="#333333" text-anchor="middle" font-weight="normal" font-style="normal" style='font-family:"Liberation Sans", sans-serif' >6</text>
<text x="308.03" y="404" font-size="12.6" fill="#333333" text-anchor="start" font-weight="normal" font-style="normal" style='font-family:"Liberation Sans", sans-serif' textLength="22.97" lengthAdjust="spacingAndGlyphs" >PLN</text>
<text x="629.40" y="404" font-size="12.6" fill="#333333" text-anchor="start" font-weight="normal" font-style="italic" style='font-family:"Liberation Sans", sans-serif' textLength="70.84" lengthAdjust="spacingAndGlyphs" >2020-09-11</text>
<text x="707.11" y="404" font-size="12.6" fill="#333333" text-anchor="start" font-weight="normal" font-style="normal" style='font-family:"Liberation Sans", sans-serif' textLength="79.56" lengthAdjust="spacingAndGlyphs" >FV/2020/113</text>
<rect x="268" y="412" width="36" height="1" fill="#a9a9a9" />
<rect x="305" y="412" width="198" height="1" fill="#cdd5d1" />
<rect x="504" y="412" width="398" height="1" fill="#d9d9d9" />
<rect x="268" y="413" width="36" height="25" fill="#e5e5e5" />
<rect x="305" y="413" width="198" height="25" fill="#d5efe2" />
<rect x="504" y="413" width="199" height="25" fill="#ffffff" />
<rect x="704" y="413" width="198" height="25" fill="#ffffff" />
<text x="286.00" y="432" font-size="15" fill="#333333" text-anchor="middle" font-weight="normal" font-style="normal" style='font-family:"Liberation Sans", sans-serif' >7</text>
<text x="308.03" y="431" font-size="12.6" fill="#333333" text-anchor="start" font-weight="normal" font-style="normal" style='font-family:"Liberation Sans", sans-serif' textLength="22.97" lengthAdjust="spacingAndGlyphs" >PLN</text>
<text x="629.40" y="431" font-size="12.6" fill="#333333" text-anchor="start" font-weight="normal" font-style="italic" style='font-family:"Liberation Sans", sans-serif' textLength="67.19" lengthAdjust="spacingAndGlyphs" >2020-09-17</text>
<text x="707.11" y="431" font-size="12.6" fill="#333333" text-anchor="start" font-weight="normal" font-style="normal" style='font-family:"Liberation Sans", sans-serif' textLength="79.56" lengthAdjust="spacingAndGlyphs" >FV/2020/114</text>
<rect x="268" y="438" width="36" height="1" fill="#a9a9a9" />
<rect x="305" y="438" width="198" height="1" fill="#cdd5d1" />
<rect x="504" y="438" width="398" height="1" fill="#d9d9d9" />
<rect x="268" y="439" width="36" height="26" fill="#e5e5e5" />
<rect x="305" y="439" width="198" height="26" fill="#d5efe2" />
<rect x="504" y="439" width="199" height="26" fill="#ffffff" />
<rect x="704" y="439" width="198" height="26" fill="#ffffff" />
<text x="286.00" y="458" font-size="15" fill="#333333" text-anchor="middle" font-weight="normal" font-style="normal" style='font-family:"Liberation Sans", sans-serif' >8</text>
<text x="308.03" y="457" font-size="12.6" fill="#333333" text-anchor="start" font-weight="normal" font-style="normal" style='font-family:"Liberation Sans", sans-serif' textLength="22.97" lengthAdjust="spacingAndGlyphs" >PLN</text>
<text x="629.40" y="457" font-size="12.6" fill="#333333" text-anchor="start" font-weight="normal" font-style="italic" style='font-family:"Liberation Sans", sans-serif' textLength="67.19" lengthAdjust="spacingAndGlyphs" >2020-09-17</text>
<text x="707.11" y="457" font-size="12.6" fill="#333333" text-anchor="start" font-weight="normal" font-style="normal" style='font-family:"Liberation Sans", sans-serif' textLength="79.56" lengthAdjust="spacingAndGlyphs" >FV/2020/115</text>
<rect x="268" y="465" width="36" height="1" fill="#a9a9a9" />
<rect x="305" y="465" width="198" height="1" fill="#cdd5d1" />
<rect x="504" y="465" width="398" height="1" fill="#d9d9d9" />
<rect x="268" y="466" width="36" height="25" fill="#e5e5e5" />
<rect x="305" y="466" width="198" height="25" fill="#d5efe2" />
<rect x="504" y="466" width="199" height="25" fill="#ffffff" />
<rect x="704" y="466" width="198" height="25" fill="#ffffff" />
<text x="286.00" y="484" font-size="15" fill="#333333" text-anchor="middle" font-weight="normal" font-style="normal" style='font-family:"Liberation Sans", sans-serif' >9</text>
<text x="308.03" y="483" font-size="12.6" fill="#333333" text-anchor="start" font-weight="normal" font-style="normal" style='font-family:"Liberation Sans", sans-serif' textLength="22.97" lengthAdjust="spacingAndGlyphs" >PLN</text>
<text x="629.40" y="483" font-size="12.6" fill="#333333" text-anchor="start" font-weight="normal" font-style="italic" style='font-family:"Liberation Sans", sans-serif' textLength="68.33" lengthAdjust="spacingAndGlyphs" >2020-09-18</text>
<text x="707.11" y="483" font-size="12.6" fill="#333333" text-anchor="start" font-weight="normal" font-style="normal" style='font-family:"Liberation Sans", sans-serif' textLength="79.56" lengthAdjust="spacingAndGlyphs" >FV/2020/116</text>
<rect x="268" y="491" width="36" height="1" fill="#a9a9a9" />
<rect x="305" y="491" width="198" height="1" fill="#cdd5d1" />
<rect x="504" y="491" width="398" height="1" fill="#d9d9d9" />
<rect x="268" y="492" width="36" height="25" fill="#e5e5e5" />
<rect x="305" y="492" width="198" height="25" fill="#d5efe2" />
<rect x="504" y="492" width="199" height="25" fill="#ffffff" />
<rect x="704" y="492" width="198" height="25" fill="#ffffff" />
<text x="286.00" y="510" font-size="15" fill="#333333" text-anchor="middle" font-weight="normal" font-style="normal" style='font-family:"Liberation Sans", sans-serif' >10</text>
<text x="308.03" y="509" font-size="12.6" fill="#333333" text-anchor="start" font-weight="normal" font-style="normal" style='font-family:"Liberation Sans", sans-serif' textLength="22.97" lengthAdjust="spacingAndGlyphs" >PLN</text>
<text x="629.40" y="509" font-size="12.6" fill="#333333" text-anchor="start" font-weight="normal" font-style="italic" style='font-family:"Liberation Sans", sans-serif' textLength="68.33" lengthAdjust="spacingAndGlyphs" >2020-09-22</text>
<text x="707.11" y="509" font-size="12.6" fill="#333333" text-anchor="start" font-weight="normal" font-style="normal" style='font-family:"Liberation Sans", sans-serif' textLength="79.56" lengthAdjust="spacingAndGlyphs" >FV/2020/117</text>
<rect x="268" y="517" width="36" height="1" fill="#a9a9a9" />
<rect x="305" y="517" width="198" height="1" fill="#cdd5d1" />
<rect x="504" y="517" width="398" height="1" fill="#d9d9d9" />
<rect x="268" y="518" width="36" height="25" fill="#e5e5e5" />
<rect x="305" y="518" width="198" height="25" fill="#d5efe2" />
<rect x="504" y="518" width="199" height="25" fill="#ffffff" />
<rect x="704" y="518" width="198" height="25" fill="#ffffff" />
<text x="286.00" y="537" font-size="15" fill="#333333" text-anchor="middle" font-weight="normal" font-style="normal" style='font-family:"Liberation Sans", sans-serif' >11</text>
<text x="308.00" y="536" font-size="12.6" fill="#333333" text-anchor="start" font-weight="normal" font-style="normal" style='font-family:"Liberation Sans", sans-serif' textLength="25.08" lengthAdjust="spacingAndGlyphs" >EUR</text>
<text x="629.40" y="536" font-size="12.6" fill="#333333" text-anchor="start" font-weight="normal" font-style="italic" style='font-family:"Liberation Sans", sans-serif' textLength="68.33" lengthAdjust="spacingAndGlyphs" >2020-09-24</text>
<text x="707.03" y="536" font-size="12.6" fill="#333333" text-anchor="start" font-weight="normal" font-style="normal" style='font-family:"Liberation Sans", sans-serif' textLength="64.97" lengthAdjust="spacingAndGlyphs" >1/09/2020</text>
<rect x="268" y="543" width="36" height="1" fill="#a9a9a9" />
<rect x="305" y="543" width="198" height="1" fill="#cdd5d1" />
<rect x="504" y="543" width="398" height="1" fill="#d9d9d9" />
<rect x="268" y="544" width="36" height="25" fill="#e5e5e5" />
<rect x="305" y="544" width="198" height="25" fill="#d5efe2" />
<rect x="504" y="544" width="199" height="25" fill="#ffffff" />
<rect x="704" y="544" width="198" height="25" fill="#ffffff" />
<text x="286.00" y="563" font-size="15" fill="#333333" text-anchor="middle" font-weight="normal" font-style="normal" style='font-family:"Liberation Sans", sans-serif' >12</text>
<text x="308.03" y="562" font-size="12.6" fill="#333333" text-anchor="start" font-weight="normal" font-style="normal" style='font-family:"Liberation Sans", sans-serif' textLength="22.97" lengthAdjust="spacingAndGlyphs" >PLN</text>
<text x="629.40" y="562" font-size="12.6" fill="#333333" text-anchor="start" font-weight="normal" font-style="italic" style='font-family:"Liberation Sans", sans-serif' textLength="68.33" lengthAdjust="spacingAndGlyphs" >2020-09-24</text>
<text x="707.11" y="562" font-size="12.6" fill="#333333" text-anchor="start" font-weight="normal" font-style="normal" style='font-family:"Liberation Sans", sans-serif' textLength="79.56" lengthAdjust="spacingAndGlyphs" >FV/2020/118</text>
<rect x="268" y="569" width="36" height="1" fill="#a9a9a9" />
<rect x="305" y="569" width="198" height="1" fill="#cdd5d1" />
<rect x="504" y="569" width="398" height="1" fill="#d9d9d9" />
<rect x="268" y="570" width="36" height="26" fill="#e5e5e5" />
<rect x="305" y="570" width="198" height="26" fill="#d5efe2" />
<rect x="504" y="570" width="199" height="26" fill="#ffffff" />
<rect x="704" y="570" width="198" height="26" fill="#ffffff" />
<text x="286.00" y="589" font-size="15" fill="#333333" text-anchor="middle" font-weight="normal" font-style="normal" style='font-family:"Liberation Sans", sans-serif' >13</text>
<text x="308.03" y="588" font-size="12.6" fill="#333333" text-anchor="start" font-weight="normal" font-style="normal" style='font-family:"Liberation Sans", sans-serif' textLength="22.97" lengthAdjust="spacingAndGlyphs" >PLN</text>
<text x="629.40" y="588" font-size="12.6" fill="#333333" text-anchor="start" font-weight="normal" font-style="italic" style='font-family:"Liberation Sans", sans-serif' textLength="68.33" lengthAdjust="spacingAndGlyphs" >2020-09-25</text>
<text x="707.11" y="588" font-size="12.6" fill="#333333" text-anchor="start" font-weight="normal" font-style="normal" style='font-family:"Liberation Sans", sans-serif' textLength="79.56" lengthAdjust="spacingAndGlyphs" >FV/2020/119</text>
<rect x="268" y="596" width="36" height="1" fill="#a9a9a9" />
<rect x="305" y="596" width="198" height="1" fill="#cdd5d1" />
<rect x="504" y="596" width="398" height="1" fill="#d9d9d9" />
<rect x="268" y="597" width="36" height="25" fill="#e5e5e5" />
<rect x="305" y="597" width="198" height="25" fill="#d5efe2" />
<rect x="504" y="597" width="199" height="25" fill="#ffffff" />
<rect x="704" y="597" width="198" height="25" fill="#ffffff" />
<text x="286.00" y="615" font-size="15" fill="#333333" text-anchor="middle" font-weight="normal" font-style="normal" style='font-family:"Liberation Sans", sans-serif' >14</text>
<text x="308.00" y="614" font-size="12.6" fill="#333333" text-anchor="start" font-weight="normal" font-style="normal" style='font-family:"Liberation Sans", sans-serif' textLength="25.08" lengthAdjust="spacingAndGlyphs" >EUR</text>
<text x="629.40" y="614" font-size="12.6" fill="#333333" text-anchor="start" font-weight="normal" font-style="italic" style='font-family:"Liberation Sans", sans-serif' textLength="68.33" lengthAdjust="spacingAndGlyphs" >2020-09-30</text>
<text x="708.30" y="614" font-size="12.6" fill="#333333" text-anchor="start" font-weight="normal" font-style="normal" style='font-family:"Liberation Sans", sans-serif' textLength="63.70" lengthAdjust="spacingAndGlyphs" >2/09/2020</text>
<rect x="267" y="622" width="37" height="1" fill="#a9a9a9" />
<rect x="503" y="256" width="1" height="366" fill="#d0d0d0" />
<rect x="703" y="256" width="1" height="366" fill="#d0d0d0" />
</svg>
</body></html>
